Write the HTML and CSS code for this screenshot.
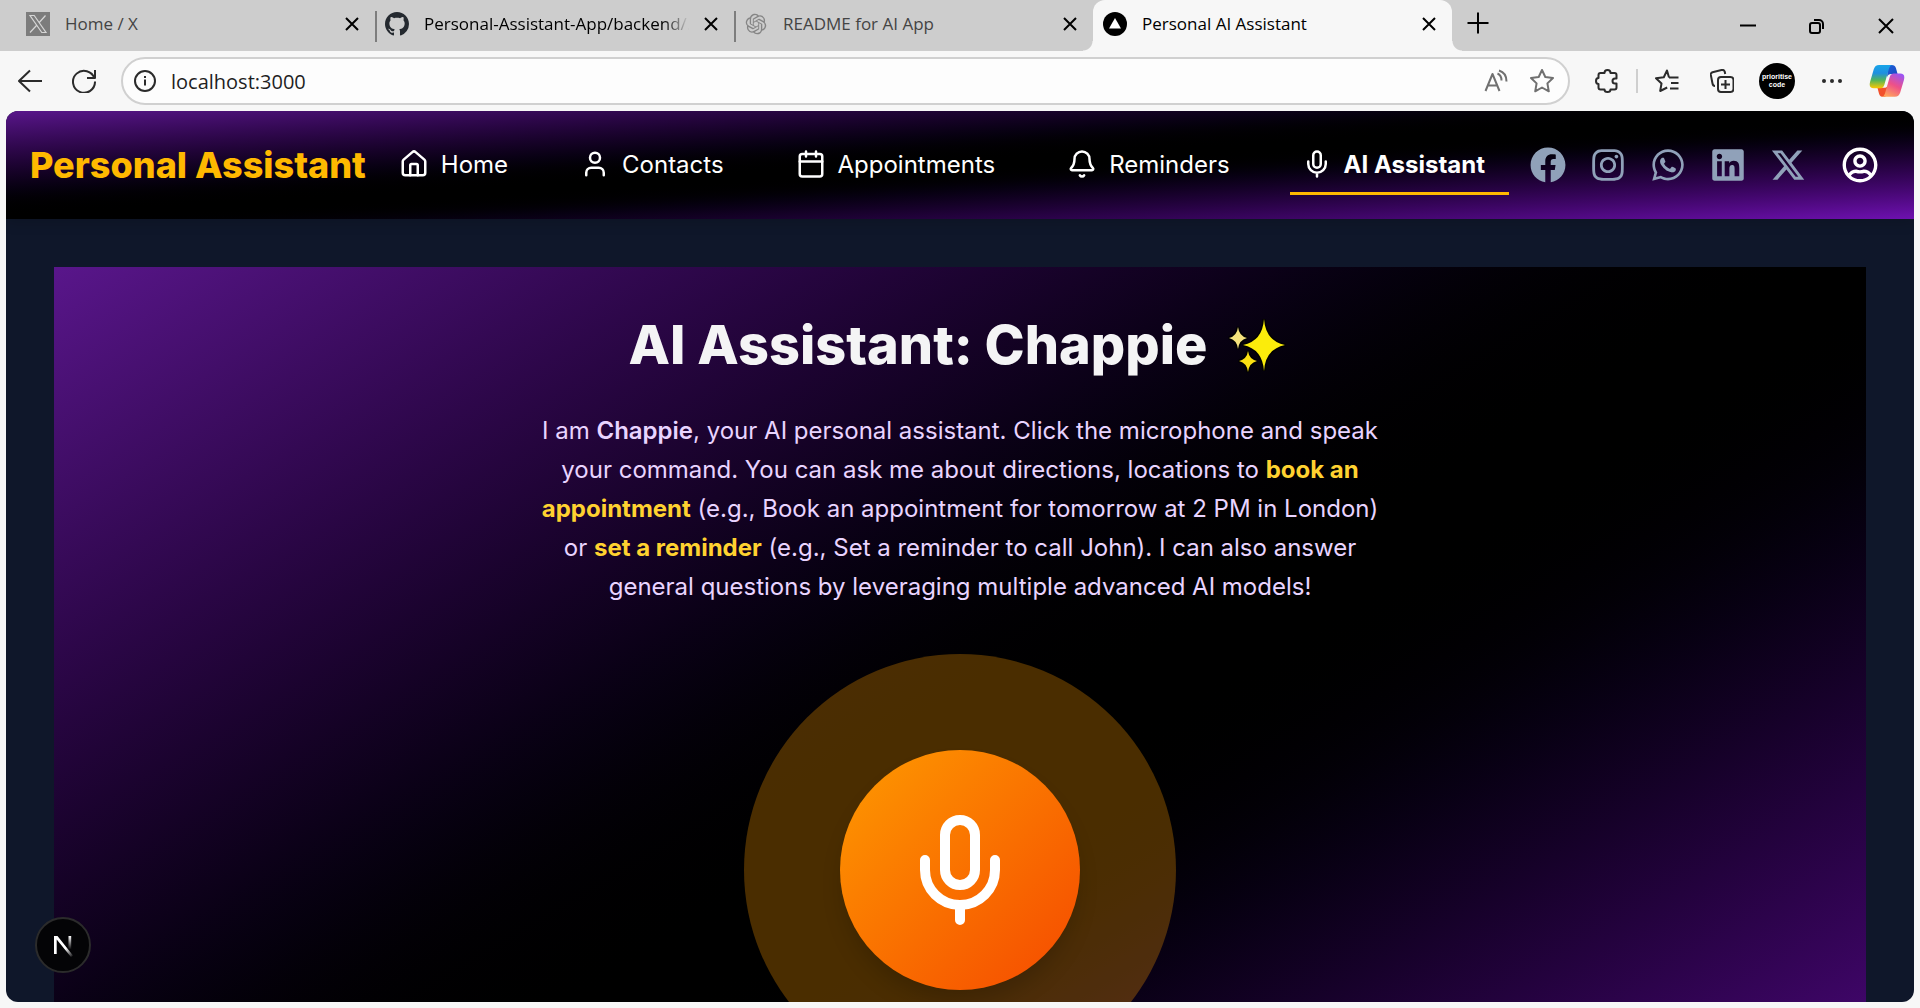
FILE: index.html
```html
<!DOCTYPE html>
<html lang="en">
<head>
<meta charset="utf-8">
<title>Personal AI Assistant</title>
<link rel="stylesheet" href="styles.css">
</head>
<body>
<div class="browser">
  <div class="tab-strip">
    <div class="tab tab-muted">
      <svg class="tab-icon" viewBox="0 0 24 24"><path fill="#7c7c7c" d="M0 0h24v24H0z"/><path fill="none" stroke="#d6d6d6" stroke-width="1.2" d="M4 3.500h4.200l11.800 17h-4.200zM19.500 3.500l-6.700 7.500M10.500 13.500l-6.500 7"/></svg>
      <span class="tab-title">Home / X</span>
      <button class="tab-close" aria-label="Close tab"><svg viewBox="0 0 14 14"><path d="M1 1l12 12M13 1L1 13"/></svg></button>
    </div>
    <div class="tab">
      <svg class="tab-icon" viewBox="0 0 16 16"><path fill="#24292f" d="M8 0C3.580 0 0 3.580 0 8c0 3.540 2.290 6.530 5.470 7.590.4.070.55-.17.55-.38 0-.19-.01-.82-.01-1.490-2.010.37-2.530-.49-2.690-.94-.09-.23-.48-.94-.82-1.130-.28-.15-.68-.52-.01-.53.63-.01 1.080.58 1.230.82.72 1.210 1.870.87 2.330.66.070-.52.28-.87.51-1.070-1.780-.2-3.640-.89-3.640-3.950 0-.87.31-1.590.82-2.150-.08-.2-.36-1.020.08-2.120 0 0 .67-.21 2.200.82.64-.18 1.320-.27 2-.27s1.360.09 2 .27c1.530-1.040 2.200-.82 2.200-.82.44 1.100.16 1.920.08 2.120.51.56.82 1.270.82 2.150 0 3.070-1.870 3.750-3.650 3.950.29.25.54.73.54 1.480 0 1.070-.01 1.930-.01 2.200 0 .21.15.46.55.38A8.010 8.010 0 0 0 16 8c0-4.420-3.580-8-8-8z"/></svg>
      <span class="tab-title tab-title-fade">Personal-Assistant-App/backend/.</span>
      <button class="tab-close" aria-label="Close tab"><svg viewBox="0 0 14 14"><path d="M1 1l12 12M13 1L1 13"/></svg></button>
    </div>
    <div class="tab tab-muted">
      <svg class="tab-icon" viewBox="-2 -2 28 28"><path fill="#858585" d="M22.282 9.821a5.985 5.985 0 0 0-.516-4.910 6.046 6.046 0 0 0-6.510-2.900A6.065 6.065 0 0 0 4.981 4.182a5.985 5.985 0 0 0-3.998 2.900 6.046 6.046 0 0 0 .743 7.097 5.980 5.980 0 0 0 .510 4.911 6.051 6.051 0 0 0 6.515 2.900A5.985 5.985 0 0 0 13.260 24a6.056 6.056 0 0 0 5.772-4.206 5.990 5.990 0 0 0 3.998-2.900 6.056 6.056 0 0 0-.748-7.073zM13.260 22.430a4.476 4.476 0 0 1-2.876-1.041l.141-.08 4.779-2.758a.795.795 0 0 0 .392-.681v-6.737l2.020 1.169a.071.071 0 0 1 .038.052v5.583a4.504 4.504 0 0 1-4.494 4.493zM3.600 18.304a4.471 4.471 0 0 1-.535-3.014l.142.085 4.783 2.758a.771.771 0 0 0 .780 0l5.843-3.368v2.332a.08.08 0 0 1-.033.062L9.740 19.950a4.500 4.500 0 0 1-6.140-1.646zM2.340 7.896a4.485 4.485 0 0 1 2.366-1.973V11.600a.766.766 0 0 0 .388.676l5.814 3.355-2.020 1.168a.076.076 0 0 1-.071 0l-4.830-2.786A4.504 4.504 0 0 1 2.340 7.896zm16.597 3.856l-5.833-3.387L15.119 7.200a.076.076 0 0 1 .071 0l4.830 2.791a4.494 4.494 0 0 1-.676 8.105v-5.678a.79.79 0 0 0-.407-.667zm2.010-3.023l-.141-.085-4.774-2.782a.776.776 0 0 0-.785 0L9.409 9.230V6.897a.066.066 0 0 1 .028-.061l4.830-2.787a4.500 4.500 0 0 1 6.680 4.660zm-12.640 4.135l-2.020-1.164a.08.08 0 0 1-.038-.057V6.075a4.500 4.500 0 0 1 7.375-3.453l-.142.080L8.704 5.460a.795.795 0 0 0-.393.681zm1.097-2.365l2.602-1.500 2.607 1.500v2.999l-2.597 1.500-2.607-1.500z"/></svg>
      <span class="tab-title">README for AI App</span>
      <button class="tab-close" aria-label="Close tab"><svg viewBox="0 0 14 14"><path d="M1 1l12 12M13 1L1 13"/></svg></button>
    </div>
    <div class="tab tab-active">
      <svg class="tab-icon" viewBox="0 0 24 24"><circle cx="12" cy="12" r="12"/><path fill="#fff" d="M12 6l6 10.500H6z"/></svg>
      <span class="tab-title">Personal AI Assistant</span>
      <button class="tab-close" aria-label="Close tab"><svg viewBox="0 0 14 14"><path d="M1 1l12 12M13 1L1 13"/></svg></button>
    </div>
    <button class="new-tab" aria-label="New tab"><svg viewBox="0 0 22 22"><path d="M11 0.500v21M0.500 11h21"/></svg></button>
    <div class="window-controls">
      <button aria-label="Minimize"><svg viewBox="0 0 16 16"><path d="M0 7.500h16"/></svg></button>
      <button aria-label="Restore"><svg viewBox="0 0 16 16"><rect x="1" y="5" width="10" height="10" rx="2"/><path d="M5 2h5a4 4 0 0 1 4 4v5"/></svg></button>
      <button aria-label="Close"><svg viewBox="0 0 16 16"><path d="M1 1l14 14M15 1L1 15"/></svg></button>
    </div>
  </div>

  <div class="toolbar">
    <div class="tool-group tool-group-nav">
      <button class="tool" aria-label="Back"><svg viewBox="0 0 24 24"><path d="M24 12H1M12 1.500L1 12l11 10.500"/></svg></button>
      <button class="tool" aria-label="Refresh"><svg viewBox="0 0 24 24"><path d="M22.500 9.500A11 11 0 1 0 23 12.500M23 1v8h-8"/></svg></button>
    </div>
    <div class="address">
      <svg class="info" viewBox="0 0 22 22"><circle cx="11" cy="11" r="10"/><path d="M11 9.500v6M11 6v2"/></svg>
      <input class="url" type="text" value="localhost:3000" aria-label="Address">
      <button class="tool tool-soft" aria-label="Read aloud"><svg viewBox="0 0 24 24"><path d="M1.500 22L8.500 5l7 17M4 16.500h9M13.500 4.500c2.500 1 4 3.500 4 7M15 1.500c5 1.500 7.500 5.500 7.500 11"/></svg></button>
      <button class="tool tool-soft" aria-label="Add to favorites"><svg viewBox="0 0 24 24"><path d="M12 1l3.300 7 7.700 1-5.600 5.400 1.400 7.900L12 18.500l-6.800 3.800 1.400-7.900L1 9l7.700-1z"/></svg></button>
    </div>
    <div class="tool-group">
      <button class="tool" aria-label="Extensions"><svg viewBox="0 0 24 24"><path d="M3.500 6q0-2 2-2H9.500q0-3 3-3t3 3h4q2 0 2 2v3.500h-1.500q-2.500 0-2.500 2.500t2.500 2.500h1.500v4q0 2-2 2h-4q0 2.500-3 2.500t-3-2.500h-4q-2 0-2-2V15q-2.500 0-2.500-3t2.500-3z"/></svg></button>
      <span class="divider"></span>
      <button class="tool" aria-label="Favorites"><svg viewBox="0 0 24 24"><path d="M14 8.500L12 1.500 8.800 8.300 1 9.300l5.500 5.200L5.200 22l7-3.500M14 8.500h9.500M16 14h7.500M15 19.500h8.500"/></svg></button>
    </div>
    <button class="tool" aria-label="Collections"><svg viewBox="0 0 24 24"><rect x="8" y="8" width="15.500" height="15" rx="3"/><path d="M15.500 11v9M11 15.500h9M5 17q-2 0-2.500-2.500L.8 6Q.5 4 2.500 3.200l9-2.200q2.500-.5 3.200 1.500l.5 2.500"/></svg></button>
    <button class="avatar" aria-label="Profile">prioritise<br>code</button>
    <button class="tool" aria-label="Settings and more"><svg class="dots" viewBox="0 0 24 24"><circle cx="4" cy="12" r="2"/><circle cx="12" cy="12" r="2"/><circle cx="20" cy="12" r="2"/></svg></button>
    <button class="copilot" aria-label="Copilot">
      <svg viewBox="0 0 34 32">
        <defs>
          <linearGradient id="cp-a" x1="0" y1="0" x2="0" y2="1"><stop offset="0" stop-color="#18a5e8"/><stop offset=".35" stop-color="#1f8fe0"/><stop offset=".65" stop-color="#52b55a"/><stop offset="1" stop-color="#ffc800"/></linearGradient>
          <linearGradient id="cp-b" x1=".8" y1="0" x2=".3" y2="1"><stop offset="0" stop-color="#9a55f5"/><stop offset=".5" stop-color="#ee5088"/><stop offset="1" stop-color="#ffa45c"/></linearGradient>
          <linearGradient id="cp-c" x1="0" y1="0" x2="1" y2="1"><stop offset="0" stop-color="#1d60d8"/><stop offset="1" stop-color="#1b48c0"/></linearGradient>
        </defs>
        <path fill="url(#cp-c)" d="M18 1h3.500q3 0 4 3l1.500 5.500h-6q-3 0-4 3z"/>
        <path fill="#f2512c" d="M15.500 31h-2q-3 0-4-3L8 22.500h6q3 0 4-3z"/>
        <path fill="url(#cp-a)" d="M9.500 1H22q-2 0-3 3l-4.500 15.500q-1 3.500-4 3.500H4.500q-5 0-3.500-6L4.500 5q1.200-4 5-4z"/>
        <path fill="url(#cp-b)" d="M24.500 31H12q2 0 3-3l4.500-15.500q1-3.500 4-3.500h6q5 0 3.500 6L29.500 27q-1.200 4-5 4z"/>
      </svg>
    </button>
  </div>

  <div class="page">
    <header class="navbar">
      <a class="brand" href="#home">Personal Assistant</a>
      <nav class="nav">
        <a class="nav-item" href="#home"><svg viewBox="0 0 24 24"><path d="M15 21v-8a1 1 0 0 0-1-1h-4a1 1 0 0 0-1 1v8"/><path d="M3 10a2 2 0 0 1 .709-1.528l7-5.999a2 2 0 0 1 2.582 0l7 5.999A2 2 0 0 1 21 10v9a2 2 0 0 1-2 2H5a2 2 0 0 1-2-2z"/></svg>Home</a>
        <a class="nav-item" href="#contacts"><svg viewBox="0 0 24 24"><path d="M19 21v-2a4 4 0 0 0-4-4H9a4 4 0 0 0-4 4v2"/><circle cx="12" cy="7" r="4"/></svg>Contacts</a>
        <a class="nav-item" href="#appointments"><svg viewBox="0 0 24 24"><path d="M8 2v4M16 2v4M3 10h18"/><rect x="3" y="4" width="18" height="18" rx="2"/></svg>Appointments</a>
        <a class="nav-item" href="#reminders"><svg viewBox="0 0 24 24"><path d="M10.268 21a2 2 0 0 0 3.464 0"/><path d="M3.262 15.326A1 1 0 0 0 4 17h16a1 1 0 0 0 .740-1.673C19.410 13.956 18 12.499 18 8A6 6 0 0 0 6 8c0 4.499-1.411 5.956-2.738 7.326"/></svg>Reminders</a>
        <a class="nav-item nav-item-active" href="#assistant"><svg viewBox="0 0 24 24"><path d="M12 19v3M19 10v2a7 7 0 0 1-14 0v-2"/><rect x="9" y="2" width="6" height="13" rx="3"/></svg>AI Assistant</a>
      </nav>
      <div class="socials">
        <a href="#facebook" aria-label="Facebook"><svg viewBox="0 0 512 512"><path d="M504 256C504 119 393 8 256 8S8 119 8 256c0 123.780 90.690 226.380 209.250 245V327.690h-63V256h63v-54.640c0-62.150 37-96.480 93.670-96.480 27.140 0 55.520 4.840 55.520 4.840v61h-31.280c-30.800 0-40.410 19.120-40.410 38.730V256h68.780l-11 71.690h-57.780V501C413.310 482.380 504 379.780 504 256z"/></svg></a>
        <a href="#instagram" aria-label="Instagram"><svg viewBox="0 0 448 512"><path d="M224.100 141c-63.600 0-114.900 51.300-114.900 114.900s51.300 114.900 114.900 114.900S339 319.500 339 255.900 287.700 141 224.100 141zm0 189.600c-41.100 0-74.700-33.500-74.700-74.700s33.500-74.700 74.700-74.700 74.700 33.500 74.700 74.700-33.600 74.700-74.700 74.700zm146.400-194.300c0 14.900-12 26.800-26.800 26.800-14.900 0-26.800-12-26.800-26.800s12-26.800 26.800-26.800 26.800 12 26.800 26.800zm76.100 27.200c-1.700-35.900-9.900-67.700-36.200-93.900-26.200-26.200-58-34.400-93.900-36.200-37-2.100-147.900-2.100-184.900 0-35.800 1.700-67.600 9.900-93.900 36.100s-34.400 58-36.200 93.900c-2.100 37-2.100 147.900 0 184.900 1.700 35.900 9.900 67.700 36.200 93.900s58 34.400 93.900 36.200c37 2.100 147.900 2.100 184.900 0 35.900-1.700 67.700-9.900 93.900-36.200 26.200-26.200 34.400-58 36.200-93.900 2.100-37 2.100-147.800 0-184.800zM398.800 388c-7.800 19.600-22.900 34.700-42.600 42.600-29.500 11.700-99.500 9-132.100 9s-102.700 2.600-132.100-9c-19.600-7.800-34.700-22.900-42.600-42.600-11.700-29.500-9-99.500-9-132.100s-2.600-102.700 9-132.100c7.800-19.600 22.900-34.700 42.600-42.600 29.500-11.700 99.500-9 132.100-9s102.700-2.600 132.100 9c19.600 7.800 34.700 22.900 42.600 42.600 11.700 29.500 9 99.500 9 132.100s2.700 102.700-9 132.100z"/></svg></a>
        <a href="#whatsapp" aria-label="WhatsApp"><svg viewBox="0 0 448 512"><path d="M380.900 97.100C339 55.100 283.200 32 223.900 32c-122.400 0-222 99.600-222 222 0 39.100 10.200 77.300 29.600 111L0 480l117.700-30.900c32.400 17.700 68.900 27 106.100 27h.1c122.300 0 224.100-99.600 224.100-222 0-59.300-25.200-115-67.100-157zm-157 341.600c-33.200 0-65.700-8.900-94-25.700l-6.700-4-69.800 18.300L72 359.200l-4.400-7c-18.500-29.400-28.200-63.300-28.200-98.200 0-101.700 82.800-184.500 184.600-184.500 49.300 0 95.600 19.200 130.400 54.100 34.800 34.900 56.200 81.200 56.100 130.500 0 101.800-84.900 184.600-186.600 184.600zm101.200-138.200c-5.500-2.800-32.800-16.200-37.900-18-5.100-1.900-8.800-2.800-12.500 2.800-3.700 5.600-14.300 18-17.600 21.800-3.200 3.700-6.500 4.200-12 1.400-32.600-16.300-54-29.100-75.500-66-5.700-9.800 5.700-9.100 16.300-30.300 1.800-3.700.9-6.900-.5-9.700-1.400-2.800-12.500-30.100-17.100-41.200-4.500-10.800-9.100-9.300-12.500-9.500-3.200-.2-6.900-.2-10.600-.2-3.700 0-9.700 1.400-14.800 6.900-5.100 5.600-19.400 19-19.400 46.300 0 27.300 19.900 53.700 22.600 57.400 2.800 3.700 39.100 59.700 94.800 83.800 35.200 15.200 49 16.500 66.600 13.900 10.700-1.600 32.800-13.400 37.400-26.400 4.600-13 4.600-24.100 3.200-26.400-1.300-2.500-5-3.900-10.500-6.600z"/></svg></a>
        <a href="#linkedin" aria-label="LinkedIn"><svg viewBox="0 0 448 512"><path d="M416 32H31.900C14.300 32 0 46.500 0 64.300v383.400C0 465.500 14.300 480 31.900 480H416c17.600 0 32-14.500 32-32.300V64.300c0-17.800-14.400-32.300-32-32.300zM135.400 416H69V202.200h66.500V416zm-33.200-243c-21.300 0-38.500-17.300-38.500-38.500S80.900 96 102.200 96c21.200 0 38.500 17.300 38.500 38.500 0 21.300-17.200 38.500-38.500 38.500zm282.100 243h-66.400V312c0-24.800-.5-56.700-34.500-56.700-34.600 0-39.900 27-39.900 54.900V416h-66.400V202.200h63.700v29.200h.9c8.900-16.800 30.600-34.500 62.900-34.500 67.200 0 79.700 44.300 79.700 101.900V416z"/></svg></a>
        <a href="#x" aria-label="X"><svg viewBox="0 0 512 512"><path d="M389.200 48h70.600L305.600 224.200 487 464H345L233.700 318.600 106.500 464H35.800L200.700 275.500 26.800 48H172.400L272.900 180.900 389.200 48zM364.400 421.800h39.100L151.100 88h-42L364.400 421.800z"/></svg></a>
      </div>
      <a class="account" href="#account" aria-label="Account"><svg viewBox="0 0 496 512"><path d="M248 104c-53 0-96 43-96 96s43 96 96 96 96-43 96-96-43-96-96-96zm0 144c-26.500 0-48-21.500-48-48s21.500-48 48-48 48 21.500 48 48-21.500 48-48 48zm0-240C111 8 0 119 0 256s111 248 248 248 248-111 248-248S385 8 248 8zm0 448c-49.700 0-95.100-18.300-130.100-48.400 14.900-23 40.400-38.600 69.600-39.500 20.800 6.400 40.600 9.600 60.500 9.600s39.700-3.100 60.500-9.600c29.200 1 54.700 16.500 69.600 39.500-35 30.100-80.400 48.400-130.100 48.400zm162.700-84.100c-24.400-31.400-62.100-51.900-105.100-51.900-10.200 0-26 9.600-57.600 9.600-31.500 0-47.400-9.600-57.600-9.600-42.900 0-80.600 20.500-105.100 51.900C61.900 339.200 48 299.400 48 256c0-110.300 89.700-200 200-200s200 89.700 200 200c0 43.400-13.900 83.200-37.300 115.900z"/></svg></a>
    </header>

    <main class="content">
      <section class="card">
        <h1 class="title">AI Assistant: Chappie
          <svg class="sparkles" viewBox="0 0 60 60"><g stroke="#000" stroke-width="3" paint-order="stroke"><path fill="#fbec0b" d="M37 4q1.500 22 21 26-19.500 4-21 26-1.500-22-21-26Q35.500 26 37 4z"/><path fill="#f5e27d" d="M11 12q1 9 9 11-8 2-9 11-1-9-9-11 8-2 9-11z"/><path fill="#fbdf12" d="M21 36q1 8 9 10-8 2-9 11-1-9-9-11 8-2 9-10z"/></g></svg>
        </h1>
        <p class="intro">I am <strong class="name">Chappie</strong>, your AI personal assistant. Click the microphone and speak your command. You can ask me about directions, locations to <strong>book an appointment</strong> (e.g., Book an appointment for tomorrow at 2 PM in London) or <strong>set a reminder</strong> (e.g., Set a reminder to call John). I can also answer general questions by leveraging multiple advanced AI models!</p>
        <div class="halo">
          <button class="mic" aria-label="Start listening"><svg viewBox="0 0 24 24"><path d="M12 19v3M19 10v2a7 7 0 0 1-14 0v-2"/><rect x="9" y="2" width="6" height="13" rx="3"/></svg></button>
        </div>
      </section>
    </main>

    <button class="dev-badge" aria-label="Open developer tools">
      <svg viewBox="0 0 40 40"><defs><linearGradient id="n-a" x1="0" y1="0" x2="1" y2="1"><stop offset=".6" stop-color="#fff"/><stop offset="1" stop-color="#fff" stop-opacity="0"/></linearGradient><linearGradient id="n-b" x1="0" y1="0" x2="0" y2="1"><stop offset="0" stop-color="#fff"/><stop offset="1" stop-color="#fff" stop-opacity="0"/></linearGradient></defs><path fill="url(#n-a)" d="M11 11h3.500L30 30.500l-2 1.500L13.700 14.500V29H11z"/><path fill="url(#n-b)" d="M25.500 11h2.700v13.500h-2.700z"/></svg>
    </button>
  </div>
</div>
</body>
</html>
```
FILE: styles.css
```css
* {
  box-sizing: border-box;
}

body {
  margin: 0;
  font-family: "Inter", sans-serif;
  background: #f7f7f7;
}

button {
  padding: 0;
  border: 0;
  background: none;
  color: inherit;
  font: inherit;
}

a {
  color: inherit;
  text-decoration: none;
}

svg {
  display: block;
}

.browser {
  display: flex;
  flex-direction: column;
  height: 100vh;
  overflow: hidden;
  font-family: "Open Sans", "Noto Sans", sans-serif;
}

/* Tab strip */
.tab-strip {
  display: flex;
  flex: none;
  height: 51px;
  padding-left: 16px;
  background: #cdcdcd;
}

.tab {
  display: flex;
  align-items: center;
  flex: 0 1 359px;
  min-width: 0;
  padding: 0 16px 3px 10px;
  gap: 15px;
  font-size: 17px;
  color: #000;
  position: relative;
}

.tab-muted {
  color: #444;
}

.tab + .tab:not(.tab-active)::before {
  content: "";
  position: absolute;
  left: 0;
  top: 11px;
  width: 2px;
  height: 31px;
  background: #7d7d7d;
}

.tab-active {
  background: #f7f7f7;
  border-radius: 12px 12px 0 0;
}

.tab-active::before,
.tab-active::after {
  content: "";
  position: absolute;
  bottom: 0;
  width: 10px;
  height: 10px;
}

.tab-active::before {
  right: 100%;
  background: radial-gradient(circle at 0 0, #cdcdcd 9px, #f7f7f7 10px);
}

.tab-active::after {
  left: 100%;
  background: radial-gradient(circle at 100% 0, #cdcdcd 9px, #f7f7f7 10px);
}

.tab-icon {
  flex: none;
  width: 24px;
  height: 24px;
}

.tab-title {
  flex: 1;
  padding-bottom: 2px;
  overflow: hidden;
  white-space: nowrap;
}

.tab-title-fade {
  -webkit-mask-image: linear-gradient(to right, #000 90%, transparent);
  mask-image: linear-gradient(to right, #000 90%, transparent);
}

.tab-close {
  flex: none;
  width: 14px;
  color: #111;
}

.tab-close svg,
.new-tab svg,
.window-controls svg {
  fill: none;
  stroke: #000;
  stroke-width: 2;
}

.tab-close svg {
  width: 14px;
  height: 14px;
}

.new-tab {
  width: 52px;
  padding: 0 15px 5px;
}

.window-controls {
  display: flex;
  margin-left: auto;
}

.window-controls button {
  width: 69px;
}

.window-controls svg {
  width: 16px;
  height: 16px;
  margin: 0 auto;
}

/* Toolbar */
.toolbar {
  display: flex;
  flex: none;
  align-items: center;
  gap: 19px;
  height: 60px;
  padding: 0 15px 0 12px;
  color: #2b2b2b;
}

.tool {
  flex: none;
  width: 36px;
}

.tool svg,
.info {
  width: 24px;
  height: 24px;
  margin: 0 auto;
  fill: none;
  stroke: currentColor;
  stroke-width: 2;
  stroke-linejoin: round;
}

.tool .dots {
  fill: currentColor;
  stroke: none;
}

.tool-soft {
  color: #707070;
}

.address {
  display: flex;
  flex: 1;
  align-items: center;
  gap: 10px;
  height: 48px;
  padding: 0 8px 0 11px;
  border: 2px solid #d0d0d0;
  border-radius: 24px;
  background: #fdfdfd;
}

.info {
  flex: none;
  width: 22px;
  height: 22px;
  margin: 0;
}

.url {
  flex: 1;
  min-width: 0;
  padding: 0 0 0 5px;
  border: 0;
  background: none;
  font: 20px "Open Sans", "Noto Sans", sans-serif;
  color: #1f1f1f;
  outline: none;
}

.tool-group {
  display: flex;
  align-items: center;
  gap: 11px;
}

.tool-group-nav {
  gap: 18px;
}

.divider {
  width: 2px;
  height: 24px;
  background: #cfcfcf;
}

.avatar {
  flex: none;
  width: 36px;
  height: 36px;
  border-radius: 50%;
  background: #000;
  color: #fff;
  font: bold 7px/8px "Liberation Sans", sans-serif;
}

.copilot {
  flex: none;
  width: 36px;
}

/* Web page */
.page {
  position: relative;
  flex: 1;
  min-height: 0;
  margin: 0 6px 6px;
  border-radius: 12px;
  overflow: hidden;
  background: #0f172a;
  font-family: "Inter", sans-serif;
}

.navbar {
  display: flex;
  align-items: center;
  height: 108px;
  padding: 0 36px 0 24px;
  background: linear-gradient(to bottom right in oklab, #59168b, #000, #6e11b0);
  box-shadow: 0 4px 12px rgba(0, 0, 0, 0.15);
  color: #fff;
}

.brand {
  font-size: 36px;
  font-weight: 800;
  color: #ffb900;
}

.nav {
  display: flex;
  flex: 1;
  justify-content: space-between;
  margin: 0 21px;
}

.nav-item {
  display: flex;
  align-items: center;
  gap: 12px;
  height: 60px;
  padding: 0 24px 2px 12px;
  border: solid transparent;
  border-width: 3px 0;
  font-size: 24px;
  white-space: nowrap;
}

.nav-item-active {
  border-bottom-color: #ffb900;
  font-weight: 700;
}

.nav-item svg,
.mic svg {
  width: 30px;
  height: 30px;
  fill: none;
  stroke: currentColor;
  stroke-width: 2;
  stroke-linecap: round;
  stroke-linejoin: round;
}

.socials {
  display: flex;
  gap: 24px;
  color: #90a1b9;
}

.socials svg,
.account svg {
  width: 36px;
  height: 36px;
  fill: currentColor;
}

.account {
  margin-left: 36px;
}

.content {
  padding: 48px;
}

.card {
  display: flex;
  flex-direction: column;
  align-items: center;
  padding: 48px 48px 264px;
  background: linear-gradient(to bottom right in oklab, #59168b, #000, #6e11b0);
}

.title {
  display: flex;
  align-items: center;
  gap: 16px;
  margin: 0 0 36px;
  font-size: 54px;
  font-weight: 800;
  line-height: 60px;
  color: #f4f4f5;
}

.sparkles {
  width: 68px;
  height: 60px;
}

.intro {
  max-width: 864px;
  margin: 0 0 48px;
  font-size: 24px;
  line-height: 39px;
  text-align: center;
  color: #e9d4ff;
}

.intro strong {
  font-weight: 700;
  color: #ffd230;
}

.intro .name {
  font-weight: 600;
  color: inherit;
}

.halo {
  padding: 96px;
  border-radius: 50%;
  background: rgba(254, 154, 0, 0.29);
}

.mic {
  display: block;
  width: 240px;
  height: 240px;
  border-radius: 50%;
  background: linear-gradient(to bottom right, #fe9a00, #f54900);
  box-shadow: 0 15px 23px -5px rgba(0, 0, 0, 0.2);
  color: #fff;
}

.mic svg {
  width: 120px;
  height: 120px;
  margin: 0 auto;
}

.dev-badge {
  position: absolute;
  left: 29px;
  bottom: 29px;
  width: 56px;
  height: 56px;
  border: 2px solid #2b2b2b;
  border-radius: 50%;
  background: #040406;
}

.dev-badge svg {
  width: 40px;
  height: 40px;
  margin: 0 auto;
}
```
